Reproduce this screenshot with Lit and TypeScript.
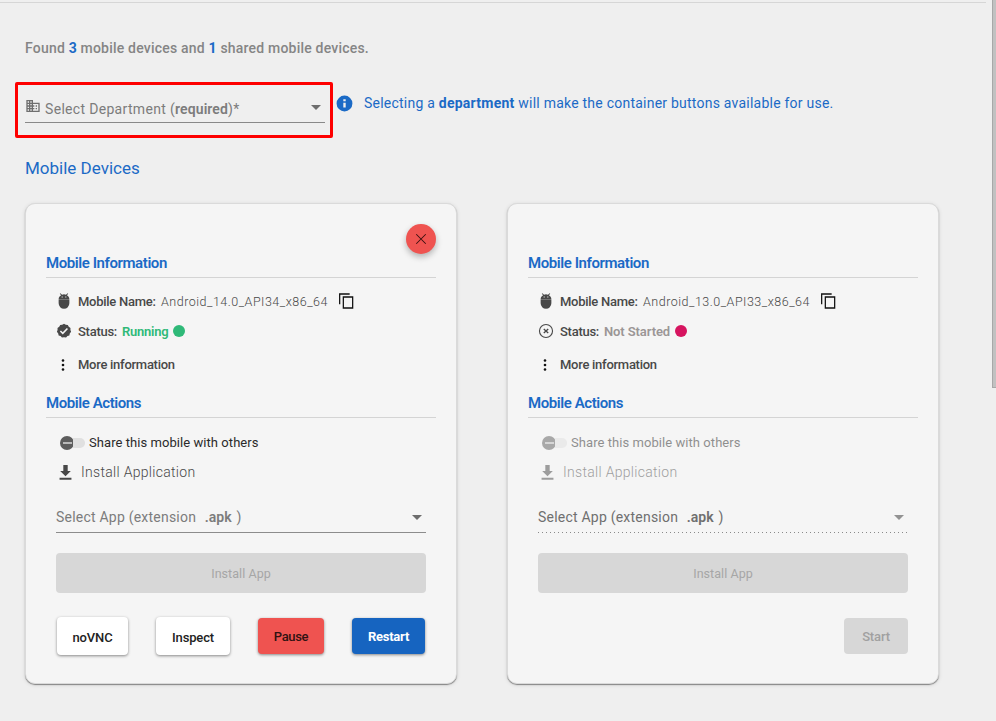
import { LitElement, html, svg, css, nothing } from "lit";
import { customElement, property } from "lit/decorators.js";

interface Mobile {
  name: string;
  running: boolean;
}

const mobiles: Mobile[] = [
  { name: "Android_14.0_API34_x86_64", running: true },
  { name: "Android_13.0_API33_x86_64", running: false },
];

const shapes = {
  building: svg`<path fill="currentColor" d="M12 7V3H2v18h20V7H12zM6 19H4v-2h2v2zm0-4H4v-2h2v2zm0-4H4V9h2v2zm0-4H4V5h2v2zm4 12H8v-2h2v2zm0-4H8v-2h2v2zm0-4H8V9h2v2zm0-4H8V5h2v2zm10 12h-8v-2h2v-2h-2v-2h2v-2h-2V9h8v10zm-2-8h-2v2h2v-2zm0 4h-2v2h2v-2z"/>`,
  info: svg`<path fill="currentColor" d="M12 2a10 10 0 1 0 0 20 10 10 0 0 0 0-20zm1.500 15h-3v-6h3zm0-8h-3V6.500h3z"/>`,
  android: svg`<path fill="currentColor" d="M2.800 8.500C3 5.700 4.600 3.300 7 2L4.800-.4l1-1 2.800 2.600a9.500 9.500 0 0 1 6.800 0l2.800-2.600 1 1L17 2c2.400 1.300 4 3.700 4.200 6.500zM8 4.300v1.700h1.700V4.300zm6.300 0v1.700H16V4.300zM2.800 9.200h18.400V16a9.200 9.200 0 0 1-18.400 0z"/>`,
  check: svg`<path fill="currentColor" d="M12-.4l3 1.800 3.500.2 1.700 3.100 2.900 2-.1 3.500 1.200 3.200-2.300 2.700-.7 3.400-3.300 1.200-2.400 2.500-3.500-.7-3.500.7-2.400-2.500-3.300-1.200-.7-3.400L-.2 13.400 1 10.200.9 6.700l2.900-2 1.700-3.100L9 1.400z"/><path d="M5.800 12l4.100 4 8-8.300" fill="none" stroke="#f5f5f5" stroke-width="2.700"/>`,
  stopped: svg`<g fill="none" stroke="currentColor"><circle cx="12" cy="12" r="11.200" stroke-width="1.900"/><path d="M8.200 8.500l7.600 7M15.800 8.500l-7.600 7" stroke-width="2.300"/></g>`,
  more: svg`<g fill="#111"><circle cx="12" cy="3" r="2.600"/><circle cx="12" cy="12" r="2.600"/><circle cx="12" cy="21" r="2.600"/></g>`,
  copy: svg`<path d="M1 17V1.500h15M6.500 6h14v16.500h-14z" fill="none" stroke="#111" stroke-width="1.900"/>`,
  download: svg`<path fill="currentColor" d="M20.500 9.500h-5V0h-7v9.500h-5l8.500 8.500zM2.500 20.500h19v3.200h-19z"/>`,
  close: svg`<path d="M2.500 2.500l19 19M21.500 2.500l-19 19" fill="none" stroke="#3c1010" stroke-width="2.100"/>`,
};

@customElement("ui-icon")
class UiIcon extends LitElement {
  @property() name: keyof typeof shapes = "info";
  static styles = css`
    :host { display: inline-flex; width: 14px; height: 14px; flex: none; }
    svg { width: 100%; height: 100%; display: block; overflow: visible; }
  `;
  render() {
    return html`<svg viewBox="0 0 24 24">${shapes[this.name]}</svg>`;
  }
}

@customElement("mobile-card")
class MobileCard extends LitElement {
  @property({ attribute: false }) mobile!: Mobile;

  static styles = css`
    :host {
      position: relative;
      box-sizing: border-box;
      width: 432px;
      height: 481px;
      border: 1px solid #dadada;
      border-radius: 10px;
      background: #f5f5f5;
      padding: 44px 20px 0;
      box-shadow: 0 1px 1px rgba(0, 0, 0, 0.4), 0 1px 4px rgba(0, 0, 0, 0.12);
      color: #484848;
      white-space: nowrap;
    }
    .close {
      position: absolute;
      top: 20px;
      right: 20px;
      width: 30px;
      height: 30px;
      border-radius: 50%;
      background: #ef5350;
      display: flex;
      align-items: center;
      justify-content: center;
      box-shadow: 0 3px 6px rgba(0, 0, 0, 0.28);
    }
    .close ui-icon { width: 12px; height: 12px; margin-right: 1px; }
    h3 {
      box-sizing: border-box;
      margin: 0;
      height: 30px;
      line-height: 30px;
      border-bottom: 1px solid #d4d4d4;
      color: #1b6ac6;
      font-size: 15px;
      font-weight: 600;
      letter-spacing: -0.420px;
    }
    h3.actions { margin-top: 9px; }
    .row {
      display: flex;
      align-items: center;
      height: 30px;
      padding-left: 11px;
      font-size: 13px;
    }
    .row.name { margin-top: 8px; }
    .row.more { margin-top: 3px; }
    .lead { margin-right: 7px; }
    .more .lead { width: 12px; height: 12px; margin: 2px 9px 0 0; }
    .label { font-weight: 500; letter-spacing: -0.270px; }
    .name .label { width: 83px; }
    .value { font-size: 12.500px; font-weight: 300; letter-spacing: 0.500px; width: 178px; }
    .copy { width: 16px; height: 16px; }
    .state { margin-left: 5px; font-weight: 600; letter-spacing: -0.250px; color: #2fb978; }
    .state.off { color: #9b9696; letter-spacing: -0.100px; }
    .dot { width: 12px; height: 12px; border-radius: 50%; background: #2fb978; margin-left: 5px; }
    .dot.off { background: #d6145f; }
    .row.share { margin-top: 10px; height: 29px; padding-left: 14px; color: #2a2a2a; letter-spacing: 0.060px; }
    .toggle { display: flex; align-items: center; width: 25px; height: 14px; margin-right: 4px; }
    .thumb { width: 14px; height: 14px; border-radius: 50%; background: #5d5d5d; display: flex; align-items: center; justify-content: center; }
    .thumb::after { content: ""; width: 9px; height: 2px; background: #b9b9b9; }
    .track { width: 12px; height: 10px; margin-left: -1px; border-radius: 0 5px 5px 0; background: #e0e0e0; }
    .row.install { padding-left: 12px; font-size: 14px; letter-spacing: 0.300px; font-weight: 300; }
    .install .lead { width: 15px; height: 15px; margin-right: 8px; }
    .select {
      box-sizing: border-box;
      display: flex;
      align-items: center;
      justify-content: space-between;
      margin: 16px 10px 0;
      height: 30px;
      border-bottom: 1px solid #8c8c8c;
      color: #7c7c7c;
      font-size: 14px;
      letter-spacing: 0.220px;
    }
    .select > :first-child { padding-bottom: 2px; }
    .select.off {
      border-bottom: 0;
      padding-bottom: 1px;
      background: repeating-linear-gradient(90deg, #8a8a8a 0 1px, transparent 1px 4px) bottom / 100% 1px no-repeat;
      color: #6f6f6f;
    }
    .select b { margin: 0 5px 0 5px; font-weight: 600; letter-spacing: 0; }
    .arrow { border: 5px solid transparent; border-top-color: #6d6d6d; border-bottom: 0; margin-right: 4px; }
    .off .arrow { border-top-color: #929292; }
    .disabled { background: #d7d7d7; color: #a6a6a6; border-radius: 4px; }
    .wide {
      margin: 20px 10px 0;
      height: 40px;
      display: flex;
      align-items: center;
      justify-content: center;
      font-size: 12.500px;
      letter-spacing: 0.050px;
    }
    .buttons {
      display: flex;
      align-items: center;
      justify-content: space-between;
      margin: 23px 11px 0;
      height: 40px;
    }
    .btn {
      box-sizing: border-box;
      display: flex;
      align-items: center;
      justify-content: center;
      height: 36px;
      border-radius: 4px;
      font-size: 13px;
      font-weight: 500;
      letter-spacing: -0.150px;
      color: #222;
      box-shadow: 0 1px 3px rgba(0, 0, 0, 0.45);
    }
    .plain { height: 38px; padding: 2px 0 0; background: #fff; }
    .novnc { width: 71px; }
    .inspect { width: 74px; }
    .pause { width: 66px; background: #ef5350; color: #301212; letter-spacing: -0.350px; }
    .restart { width: 73px; background: #1664c0; color: #fff; font-weight: 700; letter-spacing: -0.250px; }
    .start { width: 64px; margin: 0 -1px 0 auto; box-shadow: none; color: #a0a0a0; }
    .dim { opacity: 0.5; }
  `;

  render() {
    const { name, running } = this.mobile;
    const off = running ? "" : "off";
    const dim = running ? "" : "dim";
    return html`
      ${running ? html`<div class="close"><ui-icon name="close"></ui-icon></div>` : nothing}
      <h3>Mobile Information</h3>
      <div class="row name">
        <ui-icon class="lead" name="android"></ui-icon><span class="label">Mobile Name:</span
        ><span class="value">${name}</span><ui-icon class="copy" name="copy"></ui-icon>
      </div>
      <div class="row">
        <ui-icon class="lead" name=${running ? "check" : "stopped"}></ui-icon>
        <span class="label">Status:</span>
        <span class="state ${off}">${running ? "Running" : "Not Started"}</span>
        <span class="dot ${off}"></span>
      </div>
      <div class="row more">
        <ui-icon class="lead" name="more"></ui-icon><span class="label">More information</span>
      </div>
      <h3 class="actions">Mobile Actions</h3>
      <div class="row share ${dim}">
        <span class="toggle"><span class="thumb"></span><span class="track"></span></span>
        <span>Share this mobile with others</span>
      </div>
      <div class="row install ${dim}">
        <ui-icon class="lead" name="download"></ui-icon><span>Install Application</span>
      </div>
      <div class="select ${off}">
        <span>Select App (extension <b>.apk</b>)</span><span class="arrow"></span>
      </div>
      <div class="wide disabled">Install App</div>
      <div class="buttons">
        ${running
          ? html`<span class="btn plain novnc">noVNC</span>
              <span class="btn plain inspect">Inspect</span>
              <span class="btn pause">Pause</span>
              <span class="btn restart">Restart</span>`
          : html`<span class="btn start disabled">Start</span>`}
      </div>
    `;
  }
}

@customElement("app-root")
class AppRoot extends LitElement {
  static styles = css`
    :host {
      display: flex;
      justify-content: space-between;
      height: 721px;
      background: #efefef;
      overflow: hidden;
      font-family: Roboto, "Liberation Sans", sans-serif;
      white-space: nowrap;
    }
    .page { width: 986px; padding-top: 2px; }
    .rule { height: 1px; background: #d6d6d6; }
    .content { padding-left: 25px; }
    .found { margin-top: 33px; height: 24px; line-height: 24px; font-size: 14px; font-weight: 500; color: #858585; letter-spacing: 0.200px; }
    .found b { color: #1b6ac6; font-weight: 700; }
    .bar { display: flex; height: 41px; margin-top: 22px; }
    .field {
      position: relative;
      box-sizing: border-box;
      width: 300px;
      height: 41px;
      padding-top: 13px;
      display: flex;
      align-items: center;
      border-bottom: 1px solid #898989;
      color: #7c7c7c;
      font-size: 14px;
      letter-spacing: 0.320px;
    }
    .field::after { content: ""; position: absolute; inset: 0 -8px -16px -10px; border: 3px solid #fe0000; border-radius: 2px; }
    .field ui-icon { width: 16px; height: 16px; margin: -6px 4px 0 0; color: #6f6f6f; }
    .field b { font-weight: 600; letter-spacing: 0.100px; }
    .arrow { border: 5px solid transparent; border-top-color: #6d6d6d; border-bottom: 0; margin: -2px 4px 0 auto; }
    .hint { display: flex; align-items: center; height: 42px; margin-left: 10px; font-size: 14px; color: #1b6ac6; letter-spacing: 0.230px; }
    .hint ui-icon { width: 19px; height: 19px; margin-right: 10px; }
    .hint b { font-weight: 700; letter-spacing: 0.250px; }
    h2 { margin: 33px 0 0; height: 24px; line-height: 24px; font-size: 17px; font-weight: 400; color: #1b6ac6; }
    .cards { display: flex; gap: 50px; margin-top: 23px; }
    .thumb { box-sizing: border-box; width: 4px; height: 388px; background: #c1c1c1; border-left: 1px solid #a8a8a8; border-bottom: 1px solid #a8a8a8; }
  `;

  render() {
    return html`
      <div class="page">
        <div class="rule"></div>
        <div class="content">
          <div class="found">Found <b>3</b> mobile devices and <b>1</b> shared mobile devices.</div>
          <div class="bar">
            <div class="field">
              <ui-icon name="building"></ui-icon><span>Select Department (<b>required</b>)*</span>
              <span class="arrow"></span>
            </div>
            <div class="hint">
              <ui-icon name="info"></ui-icon>
              <span>Selecting a <b>department</b> will make the container buttons available for use.</span>
            </div>
          </div>
          <h2>Mobile Devices</h2>
          <div class="cards">${mobiles.map((m) => html`<mobile-card .mobile=${m}></mobile-card>`)}</div>
        </div>
      </div>
      <div class="thumb"></div>
    `;
  }
}
